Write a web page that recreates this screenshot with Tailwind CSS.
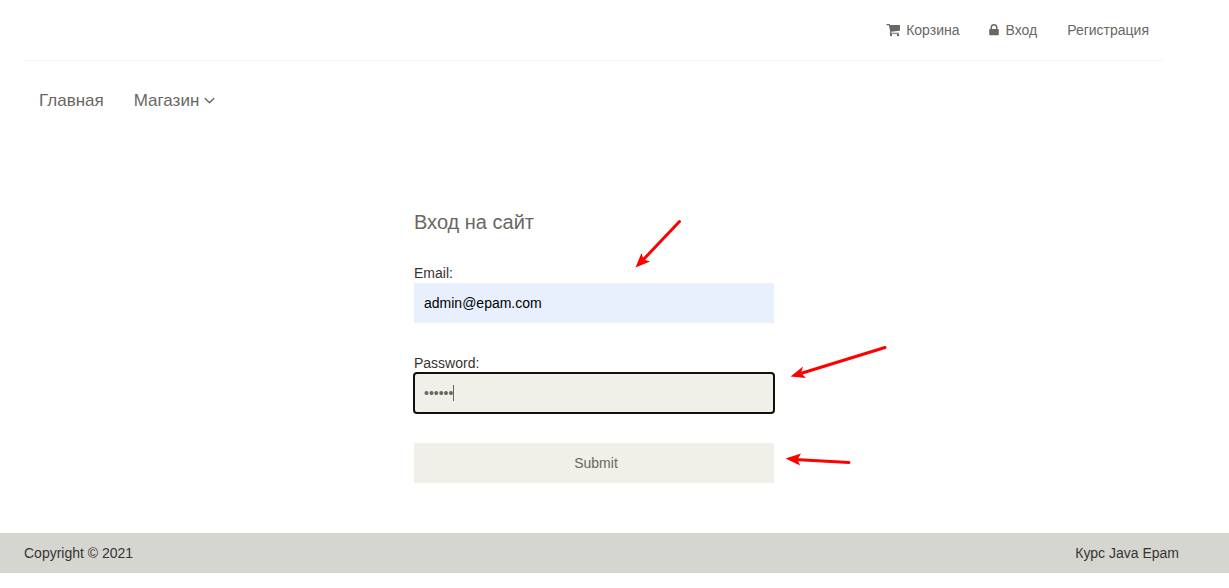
<!DOCTYPE html>
<html lang="ru">
<head>
<meta charset="utf-8">
<meta name="viewport" content="width=device-width, initial-scale=1">
<title>Вход на сайт</title>
<script src="https://cdn.jsdelivr.net/npm/@tailwindcss/browser@4"></script>
</head>
<body class="bg-white font-['Liberation_Sans',Arial,sans-serif] text-sm leading-5 text-[#363432]">
<div class="pl-6 pr-[65px]">
  <header class="text-[#696763]">
    <nav class="flex h-[61px] items-center justify-end gap-[30px] border-b border-[#f5f5f5] pr-[15px]">
      <a href="#" class="flex items-center gap-[6px]">
        <svg class="h-[14px] w-[14px]" viewBox="0 0 14 14" fill="currentColor" aria-hidden="true"><path d="M1 1h2.300q.6 0 .8 1H13.500q.5 0 .5.500v4.700q0 .5-.5.600L5.300 8.800l.1.900H12.500q.5 0 .5.500t-.5.500H4.300q-.6 0-.6-.500l.6-1.300L2.900 2.200H1q-.6 0-.6-.6T1 1z"/><circle cx="5" cy="12" r="1.200"/><circle cx="12" cy="12" r="1.200"/></svg>
        Корзина</a>
      <a href="#" class="flex items-center gap-[6px]">
        <svg class="h-[14px] w-[10px]" viewBox="0 0 10 14" fill="currentColor" aria-hidden="true"><path fill-rule="evenodd" d="M1.500 6V4.500a3.500 3.500 0 0 1 7 0V6H9q.8 0 .8.800v4.600q0 .8-.8.800H1q-.8 0-.8-.800V6.800Q.2 6 1 6zM3 6h4V4.500a2 2 0 0 0-4 0z"/></svg>
        Вход</a>
      <a href="#">Регистрация</a>
    </nav>
    <nav class="flex gap-[30px] px-[15px] pt-[30px] text-[17px]">
      <a href="#">Главная</a>
      <a href="#" class="flex items-center gap-[5px]">Магазин
        <svg class="h-[18px] w-[11px]" viewBox="0 0 11 18" fill="none" stroke="currentColor" stroke-width="1.400" stroke-linecap="round" stroke-linejoin="round" aria-hidden="true"><path d="M1.200 6.500 5.500 10.800 9.800 6.500"/></svg>
      </a>
    </nav>
  </header>
  <main class="relative mx-auto mt-[100px] mb-[50px] w-full max-w-[360px]">
    <h2 class="mb-[30px] text-xl leading-[22px] text-[#696763]">Вход на сайт</h2>
    <form>
      <label for="email" class="block">Email:</label>
      <input id="email" type="email" value="admin@epam.com" class="mb-[30px] block h-10 w-full bg-[#e8f0fe] px-[10px] text-black outline-none">
      <label for="password" class="block">Password:</label>
      <div class="relative mb-[30px]">
        <input id="password" type="password" value="123456" class="block h-10 w-full rounded-[3px] bg-[#f0f0e9] px-[10px] text-[#696763] caret-transparent outline-2 -outline-offset-1 outline-[#101010]">
        <span class="absolute top-3 left-[39px] h-4 w-px bg-[#696763]"></span>
      </div>
      <button type="submit" class="block h-10 w-full bg-[#f0f0e9] pl-1 text-[#696763]">Submit</button>
    </form>
    <svg class="pointer-events-none absolute top-0 left-[220px] h-[272px] w-[260px]" viewBox="634 211 260 272" fill="#ff0000" stroke="#ff0000" stroke-width="3" stroke-linecap="round" aria-hidden="true">
      <path d="M679.500 221.500 642 261M885 347.500 799 374M849 462.500 795 459.500"/>
      <g stroke="none">
        <path d="M635.500 267.500 641.500 253 643.500 259.500 650 261.500Z"/>
        <path d="M790.500 376.500 803 366.500 801 373 806 378Z"/>
        <path d="M785.500 458.500 801 453.500 797.500 459.500 800 465.500Z"/>
      </g>
    </svg>
  </main>
</div>
<footer class="flex h-10 items-center justify-between bg-[#d6d6d0] pr-[50px] pl-6">
  <p>Copyright © 2021</p>
  <p>Курс Java Epam</p>
</footer>
</body>
</html>
